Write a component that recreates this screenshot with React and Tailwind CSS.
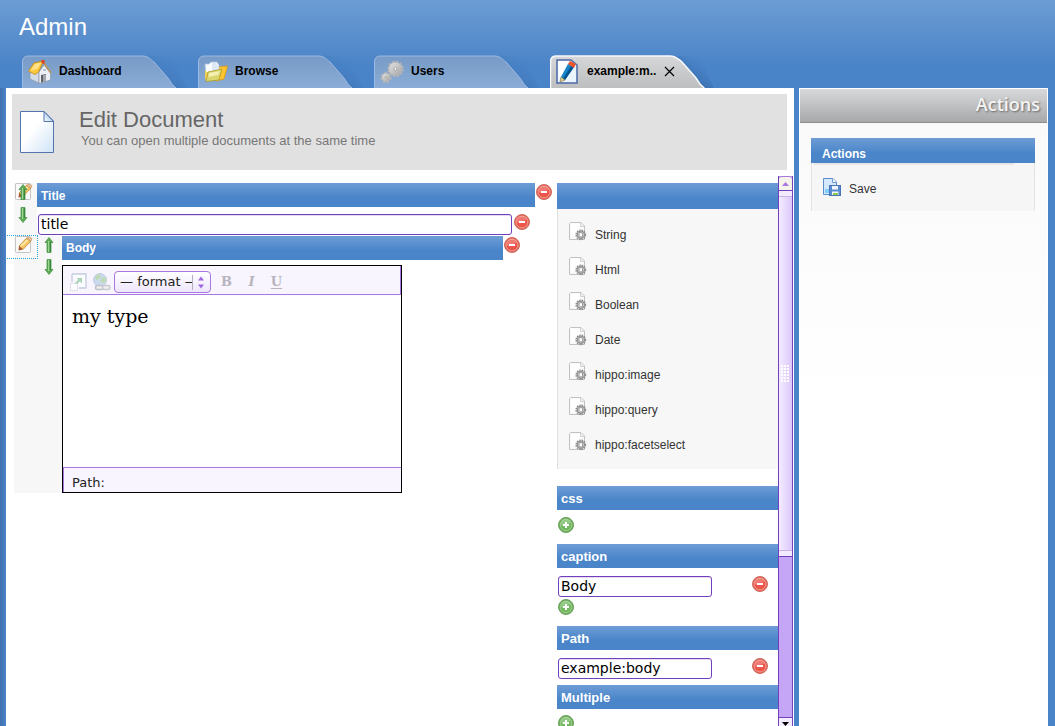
import React, { useState } from 'react';

const BAR = 'bg-linear-to-b from-[#6d9dd6] to-[#4a85c9] to-60%';

function TabShape({ id, active }) {
  return (
    <svg className="absolute inset-0" width="165" height="33" viewBox="0 0 165 33" aria-hidden="true">
      <defs>
        <linearGradient id={`${id}-fill`} x1="0" y1="0" x2="0" y2="1">
          <stop offset="0" stopColor={active ? '#d6d7d8' : '#779bc6'} />
          <stop offset="1" stopColor={active ? '#bcbdbe' : '#8badd8'} />
        </linearGradient>
        <linearGradient id={`${id}-shade`} x1="0" y1="1" x2="1" y2="0">
          <stop offset="0.4" stopColor="#2d619f" stopOpacity={active ? 0.5 : 0.25} />
          <stop offset="0.8" stopColor="#3f79be" stopOpacity="0" />
        </linearGradient>
      </defs>
      <path d="M122 1H150L164 33H150Z" fill={`url(#${id}-shade)`} />
      <path
        d="M.5 34V7Q.5 1 6.500 1H120C126 1 128 4 132 7L139 15L146 23L150 29L155 34Z"
        fill={`url(#${id}-fill)`}
        stroke={active ? '#f7f8fa' : '#9dbbe2'}
        strokeWidth={active ? 1.5 : 1}
      />
    </svg>
  );
}

function HouseIcon() {
  return (
    <svg width="24" height="24" viewBox="0 0 24 24" aria-hidden="true">
      <path d="M2 12L11 10V23L2 19Z" fill="#d3dbe6" stroke="#8b97a8" strokeWidth=".7" />
      <path d="M11 12L16 5L22.500 13V20L11 23.500Z" fill="#eceff5" stroke="#8b97a8" strokeWidth=".7" />
      <path d="M13 15L18 14V21L13 22.500Z" fill="#5f6166" />
      <path d="M15 15L18 14.500V21L15 22Z" fill="#a3a7ad" />
      <path d="M15 9H18V11H15Z" fill="#b5c4da" />
      <path d="M.5 11L6 3L15.500 1L10.500 12L7 14.500Z" fill="#fdc93d" stroke="#c48d23" strokeWidth=".9" />
      <path d="M2.500 10.500L7 4L13.500 2.500L9 9Z" fill="#ffe28a" />
      <path d="M15.500 2.500L23 13" stroke="#b99561" strokeWidth="1.8" />
      <path d="M13.500 0H16.500V4L13.500 3Z" fill="#dc431f" />
    </svg>
  );
}

function FolderIcon() {
  return (
    <svg width="24" height="22" viewBox="0 0 24 22" aria-hidden="true">
      <path d="M14 6L23.500 5L20 18L12 20Z" fill="#ffc431" stroke="#dd9a10" strokeWidth=".8" />
      <path d="M1 3H5L7 1H13L15 4V16H2Z" fill="#f8fbff" stroke="#aac0da" strokeWidth=".8" />
      <path d="M8 2H12L14 5V10H8Z" fill="#dde9f8" />
      <path d="M1 9L4 12V20L1 18Z" fill="#f6d158" />
      <path d="M4 11L18 8L15 19L2 20.500Z" fill="#d9d76e" stroke="#b09b25" strokeWidth=".8" />
      <path d="M5 12L16 10L14 14L4.500 16Z" fill="#f3f0b1" />
    </svg>
  );
}

function Gear({ cx, cy, r, hole }) {
  return (
    <g>
      <circle cx={cx} cy={cy} r={r} fill="none" stroke="#b4b4b4" strokeWidth="3" strokeDasharray="2 1.6" />
      <circle cx={cx} cy={cy} r={r} fill="url(#metal)" stroke="#b3b3b3" strokeWidth=".6" />
      <circle cx={cx} cy={cy} r={hole} fill="#fff" stroke="#999" strokeWidth=".8" />
    </g>
  );
}

function GearsIcon() {
  return (
    <svg width="24" height="24" viewBox="0 0 24 24" aria-hidden="true">
      <defs>
        <linearGradient id="metal" x1="0" y1="0" x2="1" y2="1">
          <stop offset="0" stopColor="#e4e4e4" />
          <stop offset="1" stopColor="#a3a3a3" />
        </linearGradient>
      </defs>
      <Gear cx={6} cy={17.500} r={4.2} hole={0.9} />
      <Gear cx={15.500} cy={9} r={6.800} hole={1.4} />
    </svg>
  );
}

function EditPageIcon() {
  return (
    <svg width="22" height="25" viewBox="0 0 22 25" aria-hidden="true">
      <path d="M1 1H15L21 6V24H1Z" fill="#eaf4fd" stroke="#4b68a8" strokeWidth="1.5" />
      <path d="M2 2H13L3 20Z" fill="#fff" />
      <path d="M12 5L18 8L9 21L5 18Z" fill="#1585c8" />
      <path d="M15 7L18 8L9 21L7 20Z" fill="#075390" />
      <path d="M12 5L14 2L20 5L18 9Z" fill="#ef542b" />
      <path d="M5 18L9 21L4 23Z" fill="#e7d285" stroke="#565636" strokeWidth=".5" />
    </svg>
  );
}

function DocumentIcon() {
  return (
    <svg width="34" height="42" viewBox="0 0 34 42" aria-hidden="true">
      <defs>
        <linearGradient id="paper" x1="0" y1="0" x2="1" y2="1">
          <stop offset=".4" stopColor="#fff" />
          <stop offset="1" stopColor="#cfe3f6" />
        </linearGradient>
        <linearGradient id="fold" x1="0" y1="1" x2="1" y2="0">
          <stop offset="0" stopColor="#fff" />
          <stop offset="1" stopColor="#84afe0" />
        </linearGradient>
      </defs>
      <path d="M.5 .5H24L33.500 10V41.500H.5Z" fill="url(#paper)" stroke="#5475ab" />
      <path d="M24 .5V10.500H33.500Z" fill="url(#fold)" stroke="#5475ab" />
    </svg>
  );
}

function RoundIcon({ kind }) {
  const add = kind === 'add';
  return (
    <svg width="16" height="16" viewBox="0 0 16 16" aria-hidden="true">
      <circle cx="8" cy="8" r="7.500" fill={add ? '#6dac59' : '#e0695c'} stroke={add ? '#6aa35c' : '#cf6a5c'} />
      <circle cx="8" cy="8" r="5.800" fill={add ? '#74b960' : '#ec5549'} stroke={add ? '#a3cf95' : '#f39a8f'} strokeWidth=".9" />
      <path d="M3 8A5 5 0 0 1 13 6Q9 6 7 8T3 8Z" fill="#fff" opacity=".22" />
      <path d={add ? 'M5 7H7V5H9V7H11V9H9V11H7V9H5Z' : 'M5 7H11V9H5Z'} fill="#fff" />
    </svg>
  );
}

function RoundButton({ kind, label }) {
  return (
    <button type="button" aria-label={label} className="block size-4 shrink-0">
      <RoundIcon kind={kind} />
    </button>
  );
}

function ArrowIcon({ down }) {
  return (
    <svg width="10" height="16" viewBox="0 0 10 16" aria-hidden="true">
      <path
        d={down ? 'M3 .5H7V10.500H9L5 15.500L1 10.500H3Z' : 'M3 15.500H7V5.500H9L5 .5L1 5.500H3Z'}
        fill="#5cab55"
        stroke="#4d934c"
        strokeWidth=".8"
      />
      <path d={down ? 'M4.500 1V12' : 'M4.500 4V15'} stroke="#a1d597" />
      <path d={down ? 'M6.500 1V11' : 'M6.500 5V15'} stroke="#2f7a36" strokeWidth=".7" />
    </svg>
  );
}

function PencilIcon() {
  return (
    <svg width="18" height="18" viewBox="0 0 18 18" aria-hidden="true">
      <rect x=".5" y=".5" width="15" height="16" rx="1" fill="#fafafa" stroke="#c4c4c4" />
      <path d="M4 10L11 2.500L16 5L8 13.500Z" fill="#f7c566" stroke="#c48c3c" strokeWidth=".8" />
      <path d="M6 10L12.500 4" stroke="#ffeeb4" strokeWidth="1.6" />
      <path d="M11.500 2L13 1L17 2.500L16 5Z" fill="#edc3a4" stroke="#bd8f55" strokeWidth=".6" />
      <path d="M4 10L8 13.500L3.500 14.500Z" fill="#a2562c" />
    </svg>
  );
}

function TypeIcon() {
  return (
    <svg width="18" height="19" viewBox="0 0 18 19" aria-hidden="true">
      <path d="M1.500 .5H12L15.500 4V17.500H.5V1.500Z" fill="#fafafa" stroke="#c2c2c2" />
      <path d="M2 2H11V9L2 15Z" fill="#fff" />
      <path d="M11.500 1V4.500H15" fill="#eee" stroke="#d2d2d2" />
      <circle cx="11.800" cy="12.800" r="4.700" fill="none" stroke="#8d8d8d" strokeWidth="1.4" strokeDasharray="1.5 1" />
      <circle cx="11.800" cy="12.800" r="3.600" fill="#e2e2e2" stroke="#8d8d8d" strokeWidth="1.2" />
      <rect x="10" y="10.700" width="3.600" height="4.200" rx=".5" fill="#fff" stroke="#777" strokeWidth=".8" />
    </svg>
  );
}

function SaveIcon() {
  return (
    <svg width="18" height="18" viewBox="0 0 18 18" aria-hidden="true">
      <path d="M.5 .5H10L13.500 4V16.500H.5Z" fill="#d3e8fb" stroke="#5a8dcb" />
      <path d="M9.500 .5V4.500H13.500" fill="#fff" stroke="#6f9bd2" />
      <path d="M2 11H7V15H2Z" fill="#80cef9" />
      <rect x="6.500" y="7.500" width="11" height="10" fill="#5a8ad0" stroke="#4a75b8" />
      <path d="M9 8H15V11.500H9ZM9 13.500H15.500V17H9Z" fill="#f1f6fc" />
      <path d="M10 15H15V17H10Z" fill="#8ccc55" />
    </svg>
  );
}

function ImageLinkIcon() {
  return (
    <svg width="17" height="18" viewBox="0 0 17 18" aria-hidden="true">
      <path d="M2 1H16V15H9" fill="#fbfcff" stroke="#c3cbe0" strokeWidth="1.3" />
      <path d="M2 1V9" stroke="#c3cbe0" strokeWidth="1.3" />
      <rect x=".5" y="10.500" width="7" height="7" fill="#fff" stroke="#e2e0ea" />
      <path d="M6 10.500L10 6.500" stroke="#a9d4b5" strokeWidth="2.4" />
      <path d="M6.500 5H12V10.500Z" fill="#a9d4b5" />
    </svg>
  );
}

function GlobeLinkIcon() {
  return (
    <svg width="18" height="18" viewBox="0 0 18 18" aria-hidden="true">
      <circle cx="7" cy="7" r="6.500" fill="#cbd9ef" stroke="#c2cde2" />
      <path d="M2 4Q5 0 8 2L6 6L3 7ZM9 4L13 5V9L9 10L7 8Z" fill="#bddbb5" />
      <rect x="2.500" y="12.500" width="8" height="4" rx="2" fill="#eee" stroke="#bfc1c9" strokeWidth="1.5" />
      <rect x="9.500" y="12.500" width="7.500" height="4" rx="2" fill="#eee" stroke="#c9cad0" strokeWidth="1.5" />
    </svg>
  );
}

const FIELD =
  "h-[21px] min-w-0 rounded-[3px] border border-[#7340bd] bg-white px-0.5 pb-0.5 font-['DejaVu_Sans',sans-serif] text-sm text-black shadow-[inset_0_1px_0_#e6dcf2] outline-none";

function SideHeading({ children }) {
  return <h3 className={`flex h-6 items-center px-1 pt-0.5 text-[13px] font-bold text-white ${BAR}`}>{children}</h3>;
}

const TABS = [
  { id: 'dashboard', label: 'Dashboard', icon: <HouseIcon /> },
  { id: 'browse', label: 'Browse', icon: <FolderIcon /> },
  { id: 'users', label: 'Users', icon: <GearsIcon /> },
];

const TYPES = ['String', 'Html', 'Boolean', 'Date', 'hippo:image', 'hippo:query', 'hippo:facetselect'];

function TopBar() {
  return (
    <header className="shrink-0 bg-linear-to-b from-[#6c9cd3] to-[#4a84c8] to-75% pl-[22px]">
      <h1 className="-ml-[3px] flex h-[55px] items-center pb-0.5 text-2xl text-white">Admin</h1>
      <nav className="flex h-[33px]">
        {TABS.map((t) => (
          <a key={t.id} href={`#${t.id}`} className="relative flex w-[176px] items-center text-xs font-bold text-black">
            <TabShape id={t.id} />
            <span className="relative flex w-[37px] items-center pl-1.5">{t.icon}</span>
            <span className="relative pb-px">{t.label}</span>
          </a>
        ))}
        <div className="relative flex w-[176px] items-center text-xs font-bold text-black">
          <TabShape id="example" active />
          <a href="#example" className="relative flex items-center">
            <span className="flex w-[37px] pl-1.5"><EditPageIcon /></span>
            <span className="pb-px">example:m..</span>
          </a>
          <button type="button" aria-label="Close tab" className="relative ml-2">
            <svg width="11" height="11" viewBox="0 0 11 11" aria-hidden="true">
              <path d="M1 1L10 10M10 1L1 10" stroke="#000" strokeWidth="1.2" />
            </svg>
          </button>
        </div>
      </nav>
    </header>
  );
}

function Editor() {
  return (
    <div className="mt-[5px] flex h-[228px] w-[340px] flex-col border border-black bg-white">
      <div className="flex h-[29px] shrink-0 items-center border-r border-b border-[#a878e0] bg-[#f8f5fe] pt-1 pl-[7px]">
        <button type="button" aria-label="Insert image"><ImageLinkIcon /></button>
        <button type="button" aria-label="Insert link" className="ml-1.5"><GlobeLinkIcon /></button>
        <div className="relative ml-[3px]">
          <select
            aria-label="Format"
            className="block h-[22px] w-[97px] appearance-none overflow-hidden rounded-[4px] border border-[#a878e0] bg-linear-to-b from-white to-[#eee6fc] pr-[18px] pl-[5px] font-['DejaVu_Sans',sans-serif] text-[13px] text-[#222]"
          >
            <option>— format —</option>
          </select>
          <svg className="pointer-events-none absolute top-1 right-1" width="15" height="15" viewBox="0 0 15 15" aria-hidden="true">
            <path d="M.5 0V15" stroke="#b5aec0" />
            <path d="M6 5.500L9 1.500L12 5.500ZM6 9.500L9 13.500L12 9.500Z" fill="#9d67e0" />
          </svg>
        </div>
        <div className="flex pl-2 font-['DejaVu_Serif',serif] text-[13px] font-bold text-[#b7b4be]">
          <button type="button" className="w-[15px]">B</button>
          <button type="button" className="ml-2.5 w-[15px] italic">I</button>
          <button type="button" className="ml-2.5 w-[15px] underline underline-offset-2">U</button>
        </div>
      </div>
      <div className="flex-1 px-[9px] pt-[7px] font-['DejaVu_Serif',serif] text-[19px] text-black">my type</div>
      <div className="flex h-[25px] shrink-0 items-center border-t border-l border-[#a878e0] bg-[#f8f5fe] px-2 pt-1.5 font-['DejaVu_Sans',sans-serif] text-[13px] text-[#222]">
        Path:
      </div>
    </div>
  );
}

function DocumentForm() {
  const [title, setTitle] = useState('title');
  return (
    <section className="min-w-0 flex-1 pt-[7px] pl-2">
      <div className="flex h-[53px]">
        <div className="flex w-[23px] shrink-0 flex-col items-start bg-[#f7f7f7]">
          <div className="grid pl-px">
            <button type="button" aria-label="Edit title" className="col-start-1 row-start-1"><PencilIcon /></button>
            <button type="button" aria-label="Move title up" className="z-10 col-start-1 row-start-1 pl-[3px]"><ArrowIcon /></button>
          </div>
          <button type="button" aria-label="Move title down" className="mt-1.5 ml-1"><ArrowIcon down /></button>
        </div>
        <div className="min-w-0 flex-1">
          <div className="flex gap-px">
            <label htmlFor="title" className={`flex h-6 flex-1 items-center px-1 pt-px text-xs font-bold text-white ${BAR}`}>Title</label>
            <div className="pt-px"><RoundButton kind="remove" label="Remove title" /></div>
          </div>
          <div className="mt-[7px] flex gap-0.5 pr-[22px] pl-px">
            <input id="title" value={title} onChange={(e) => setTitle(e.target.value)} className={`${FIELD} flex-1`} />
            <RoundButton kind="remove" label="Remove title value" />
          </div>
        </div>
      </div>

      <div className="flex">
        <div className="flex w-12 shrink-0 items-start bg-[#f7f7f7]">
          <button
            type="button"
            aria-label="Edit body"
            className="-mt-px -ml-[7px] flex h-6 w-[31px] shrink-0 items-start border-y border-r border-dotted border-[#27a5dc] pl-2"
          >
            <PencilIcon />
          </button>
          <div className="flex flex-col gap-1.5 pt-px pl-1.5">
            <button type="button" aria-label="Move body up"><ArrowIcon /></button>
            <button type="button" aria-label="Move body down"><ArrowIcon down /></button>
          </div>
        </div>
        <div className="min-w-0 flex-1">
          <div className="flex gap-px pr-8">
            <h2 className={`flex h-6 flex-1 items-center px-1 text-xs font-bold text-white ${BAR}`}>Body</h2>
            <div className="pt-px"><RoundButton kind="remove" label="Remove body" /></div>
          </div>
          <Editor />
        </div>
      </div>
    </section>
  );
}

function PropertyField({ label, initial }) {
  const [value, setValue] = useState(initial);
  return (
    <div className="mt-2 flex items-start justify-between pr-2.5 pl-px">
      <input aria-label={label} value={value} onChange={(e) => setValue(e.target.value)} className={`${FIELD} w-[154px]`} />
      <RoundButton kind="remove" label={`Remove ${label}`} />
    </div>
  );
}

function Properties() {
  return (
    <aside className="ml-[5px] w-[221px] shrink-0 pt-[7px]">
      <div className={`h-[26px] ${BAR}`} />
      <ul className="border-l border-[#e0e0e0] bg-[#f7f7f7] pt-2 pb-[7px] pl-[11px]">
        {TYPES.map((t) => (
          <li key={t}>
            <a href={`#${t}`} className="flex h-[35px] items-center gap-2 text-xs text-[#333]">
              <span className="pb-1.5"><TypeIcon /></span>
              <span>{t}</span>
            </a>
          </li>
        ))}
      </ul>
      <div className="mt-[17px]">
        <SideHeading>css</SideHeading>
        <div className="flex h-[34px] pt-[7px] pl-px"><RoundButton kind="add" label="Add css" /></div>
      </div>
      <SideHeading>caption</SideHeading>
      <PropertyField label="caption" initial="Body" />
      <div className="flex h-[29px] pt-0.5 pl-px"><RoundButton kind="add" label="Add caption" /></div>
      <SideHeading>Path</SideHeading>
      <PropertyField label="Path" initial="example:body" />
      <div className="mt-1.5">
        <SideHeading>Multiple</SideHeading>
        <div className="pt-1.5 pl-px"><RoundButton kind="add" label="Add multiple" /></div>
      </div>
    </aside>
  );
}

function ScrollBar() {
  return (
    <div className="mr-px flex w-[15px] shrink-0 flex-col border-x border-[#7340bd] bg-[#c5a5f5]" aria-hidden="true">
      <div className="flex h-3.5 shrink-0 items-center justify-center rounded-t-[3px] border-t border-[#a878e0] bg-[#f5f3ea]">
        <svg width="7" height="4" viewBox="0 0 7 4"><path d="M0 4L3.500 0L7 4Z" fill="#a878e0" /></svg>
      </div>
      <div className="flex flex-[366] flex-col justify-between border-y border-[#7340bd] bg-linear-to-r from-[#f4ecff] to-[#dcc6fb]">
        <div className="h-1.5 border-b border-[#c9b1ea] bg-[#f2eafd]" />
        <svg className="mx-auto" width="9" height="17" viewBox="0 0 9 17">
          {[0, 3, 6, 9, 12, 15].map((y) => (
            <path key={y} d={`M0 ${y + 1}H9`} stroke="#fff" strokeWidth="2" strokeDasharray="2 1" />
          ))}
        </svg>
        <div className="h-1.5 border-t border-[#c9b1ea] bg-[#f2eafd]" />
      </div>
      <div className="flex-[161]" />
      <div className="flex h-[9px] shrink-0 items-end justify-center border-t border-[#7340bd] bg-[#f3edfd]">
        <svg width="7" height="4" viewBox="0 0 7 4"><path d="M0 0H7L3.500 4Z" fill="#000" /></svg>
      </div>
    </div>
  );
}

function ActionsPanel() {
  return (
    <aside className="w-[249px] shrink-0 border border-b-0 border-white bg-linear-to-b from-[#f9f9f9] to-white to-50%">
      <h2 className="flex h-[34px] items-center justify-end border-b border-[#8d8e90] bg-linear-to-b from-[#d8d9da] to-[#a8a9aa] pr-[7px] pb-1 font-['Open_Sans',sans-serif] text-lg font-semibold text-[#f4f4f4] text-shadow-[1px_1px_2px_#666]">
        Actions
      </h2>
      <div className="mt-[15px] mr-3 ml-[11px]">
        <h3 className={`flex h-[25px] items-center px-[11px] pt-1.5 text-xs font-bold text-white ${BAR}`}>Actions</h3>
        <div className="h-12 border-x border-[#e3e3e3] bg-[#f6f6f6]">
          <div className="mr-5 ml-0.5 h-0.5 bg-[#e5e5e5]" />
          <button type="button" className="mt-3 ml-[11px] flex items-center gap-2 text-xs text-[#333]">
            <SaveIcon />
            <span className="pt-1">Save</span>
          </button>
        </div>
      </div>
    </aside>
  );
}

export default function App() {
  return (
    <div className="flex h-screen flex-col overflow-hidden bg-[#4a84c8] font-['Liberation_Sans',Arial,sans-serif]">
      <TopBar />
      <div className="flex min-h-0 flex-1 gap-[5px] bg-linear-to-r from-[#3f70ad] to-[#4a84c8] to-[6px] pr-[7px] pl-1.5">
        <main className="flex min-w-0 flex-1 flex-col bg-white pt-1.5">
          <div className="mr-[7px] mb-1.5 ml-1.5 flex h-[76px] shrink-0 items-center bg-[#e1e1e1] pl-2">
            <DocumentIcon />
            <div className="ml-[25px] pb-1.5">
              <h2 className="text-[22px] leading-6 text-[#666]">Edit Document</h2>
              <p className="pl-0.5 text-[13px] leading-[18px] text-[#777]">You can open multiple documents at the same time</p>
            </div>
          </div>
          <div className="flex min-h-0 flex-1">
            <DocumentForm />
            <Properties />
            <ScrollBar />
          </div>
        </main>
        <ActionsPanel />
      </div>
    </div>
  );
}
